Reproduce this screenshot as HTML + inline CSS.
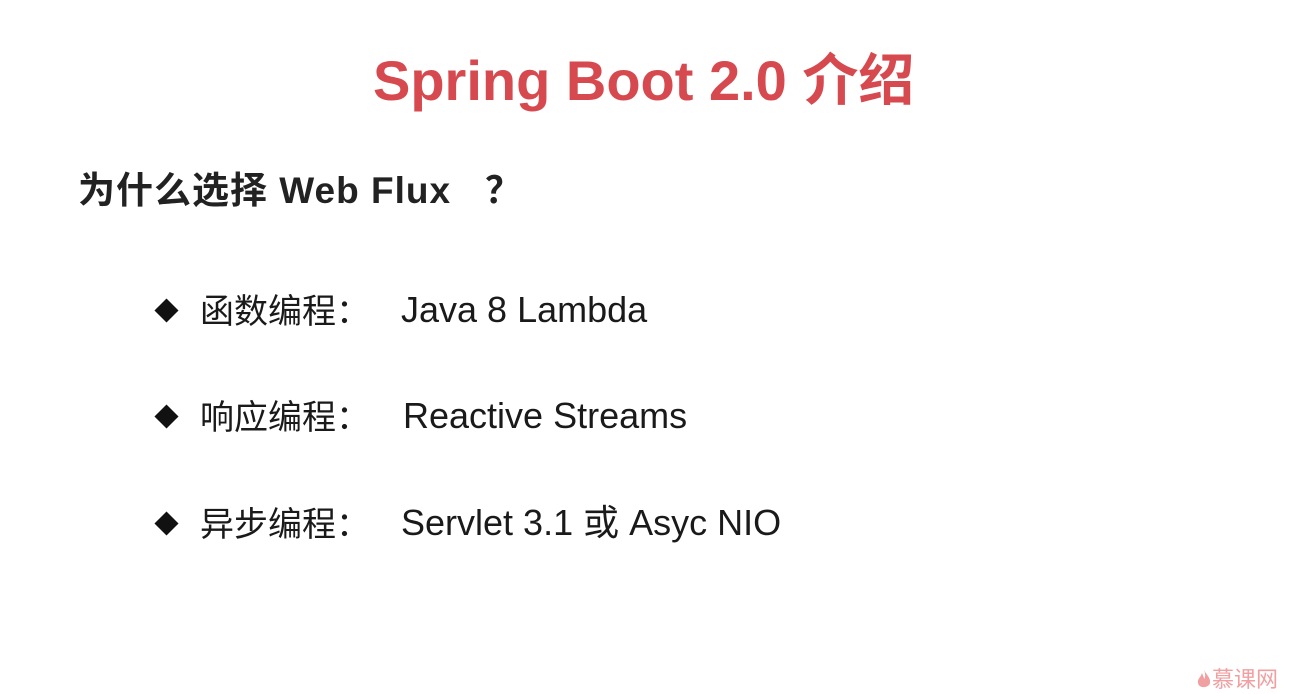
<!DOCTYPE html>
<html><head><meta charset="utf-8"><style>
body{margin:0;width:1291px;height:694px;background:#fff;position:relative;overflow:hidden;font-family:"Liberation Sans","Noto Sans CJK SC",sans-serif;color:#1a1a1a}
.a{position:absolute;white-space:nowrap}
.t{left:373px;top:36px;font-size:56px;font-weight:bold;color:#d64a4f;letter-spacing:0px}
.s{left:78px;top:160px;font-size:37px;font-weight:bold;color:#222;letter-spacing:1px}
.d{position:absolute;left:158px;width:17px;height:17px;background:#111;transform:rotate(45deg)}
.c{position:absolute;left:200px;font-size:34px;font-family:"Noto Sans CJK SC",sans-serif;line-height:1}
.v{position:absolute;font-size:36px;line-height:1}
</style></head><body>
<div class="a t">Spring Boot 2.0 介绍</div>
<div class="a s">为什么选择 Web Flux&nbsp;&nbsp; ？</div>

<div class="d" style="top:302px"></div>
<div class="a c" style="top:292px">函数编程：</div>
<div class="a v" style="left:401px;top:292px">Java 8 Lambda</div>

<div class="d" style="top:408px"></div>
<div class="a c" style="top:398px">响应编程：</div>
<div class="a v" style="left:403px;top:398px">Reactive Streams</div>

<div class="d" style="top:515px"></div>
<div class="a c" style="top:505px">异步编程：</div>
<div class="a v" style="left:401px;top:505px">Servlet 3.1 或 Asyc NIO</div>

<div class="a" style="left:1196px;top:662px;font-size:22px;color:#f0a0a0">
<svg width="16" height="22" viewBox="0 0 16 22" style="vertical-align:-3px"><path d="M8 1C9 6 15 9 14 15C13 20 3 21 2 15C1 11 5 9 6 5C7 8 8 9 8 11C10 9 9 5 8 1Z" fill="#f0a0a0"/></svg>慕课网</div>
</body></html>
